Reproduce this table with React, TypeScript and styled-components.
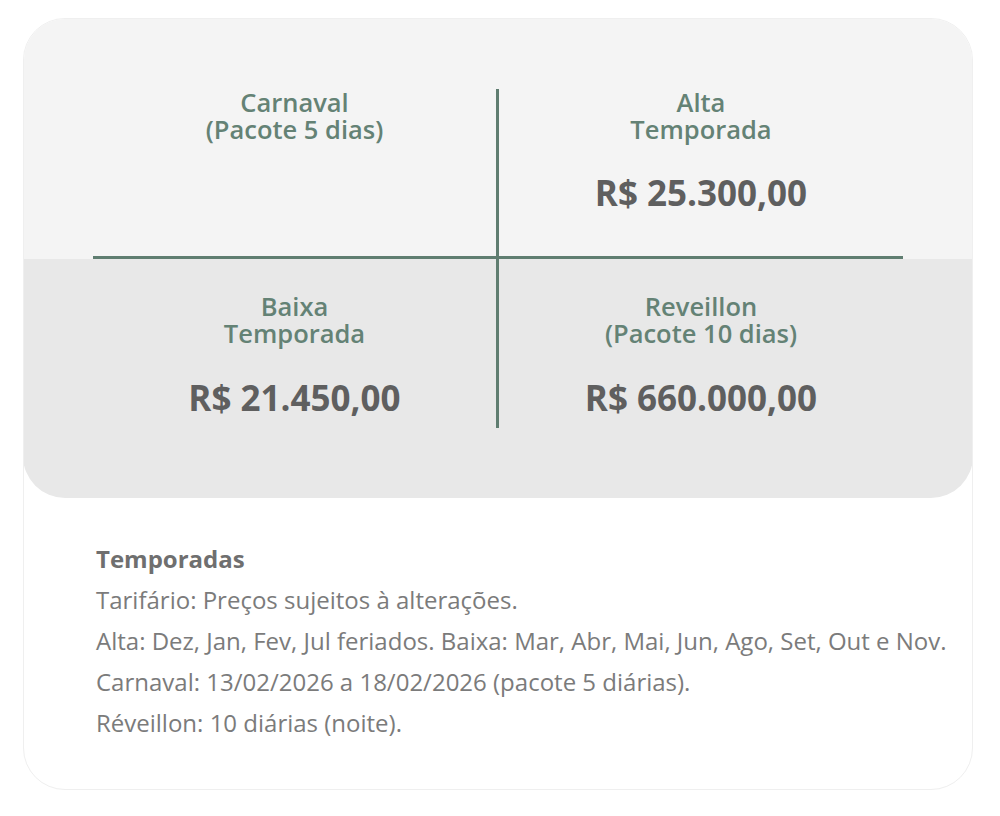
import React from "react";
import styled, { createGlobalStyle } from "styled-components";

const GlobalStyle = createGlobalStyle`
  html, body { margin: 0; padding: 0; background: #ffffff; }
  body { font-family: "Open Sans", "Noto Sans", sans-serif; }
`;

const Page = styled.div`
  padding: 18px 27px 27px 23px;
`;

const Card = styled.div`
  width: 950px;
  box-sizing: border-box;
  border: 1px solid #efefef;
  border-radius: 42px;
  background: #ffffff;
  overflow: hidden;
`;

const PriceArea = styled.div`
  margin: -1px -1px 0;
  border-radius: 42px;
  overflow: hidden;
`;

const Band = styled.div<{ $tone: "light" | "dark"; $pad: string }>`
  display: grid;
  grid-template-columns: 406px 404px;
  padding: ${(p) => p.$pad};
  background: ${(p) => (p.$tone === "light" ? "#f4f4f4" : "#e8e8e8")};
`;

const Cell = styled.div<{ $right?: boolean; $bottom?: boolean; $h: number; $pt: number }>`
  box-sizing: border-box;
  height: ${(p) => p.$h}px;
  padding-top: ${(p) => p.$pt}px;
  border-right: ${(p) => (p.$right ? "3px solid #5f7d70" : "none")};
  border-bottom: ${(p) => (p.$bottom ? "3px solid #5f7d70" : "none")};
  display: flex;
  flex-direction: column;
  align-items: center;
  text-align: center;
`;

const Label = styled.div`
  font-size: 25.5px;
  line-height: 27px;
  font-weight: 600;
  color: #648275;
`;

const Price = styled.div<{ $gap: number }>`
  margin-top: ${(p) => p.$gap}px;
  font-size: 35px;
  line-height: 40px;
  font-weight: 700;
  color: #5f5f5f;
`;

const Notes = styled.div`
  padding: 40px 30px 46px 72px;
  font-size: 24px;
  line-height: 41px;
  color: #7b7b7b;
`;

const NotesTitle = styled.div`
  font-weight: 700;
  color: #6f6f6f;
`;

const NoteLine = styled.div`
  white-space: nowrap;
`;

type Item = { lines: string[]; price?: string };

const top: Item[] = [
  { lines: ["Carnaval", "(Pacote 5 dias)"] },
  { lines: ["Alta", "Temporada"], price: "R$ 25.300,00" },
];
const bottom: Item[] = [
  { lines: ["Baixa", "Temporada"], price: "R$ 21.450,00" },
  { lines: ["Reveillon", "(Pacote 10 dias)"], price: "R$ 660.000,00" },
];

const CellContent = ({ item, gap }: { item: Item; gap: number }) => (
  <>
    <Label>
      {item.lines.map((l) => (
        <div key={l}>{l}</div>
      ))}
    </Label>
    {item.price && <Price $gap={gap}>{item.price}</Price>}
  </>
);

export default function App() {
  return (
    <Page>
      <GlobalStyle />
      <Card>
        <PriceArea>
          <Band $tone="light" $pad="71px 70px 0 70px">
            {top.map((it, i) => (
              <Cell key={i} $right={i === 0} $bottom $h={170} $pt={0}>
                <CellContent item={it} gap={30} />
              </Cell>
            ))}
          </Band>
          <Band $tone="dark" $pad="0 70px 70px 70px">
            {bottom.map((it, i) => (
              <Cell key={i} $right={i === 0} $h={169} $pt={34}>
                <CellContent item={it} gap={31} />
              </Cell>
            ))}
          </Band>
        </PriceArea>
        <Notes>
          <NotesTitle>Temporadas</NotesTitle>
          <NoteLine>Tarifário: Preços sujeitos à alterações.</NoteLine>
          <NoteLine>
            Alta: Dez, Jan, Fev, Jul feriados. Baixa: Mar, Abr, Mai, Jun, Ago, Set, Out e Nov.
          </NoteLine>
          <NoteLine>Carnaval: 13/02/2026 a 18/02/2026 (pacote 5 diárias).</NoteLine>
          <NoteLine>Réveillon: 10 diárias (noite).</NoteLine>
        </Notes>
      </Card>
    </Page>
  );
}
